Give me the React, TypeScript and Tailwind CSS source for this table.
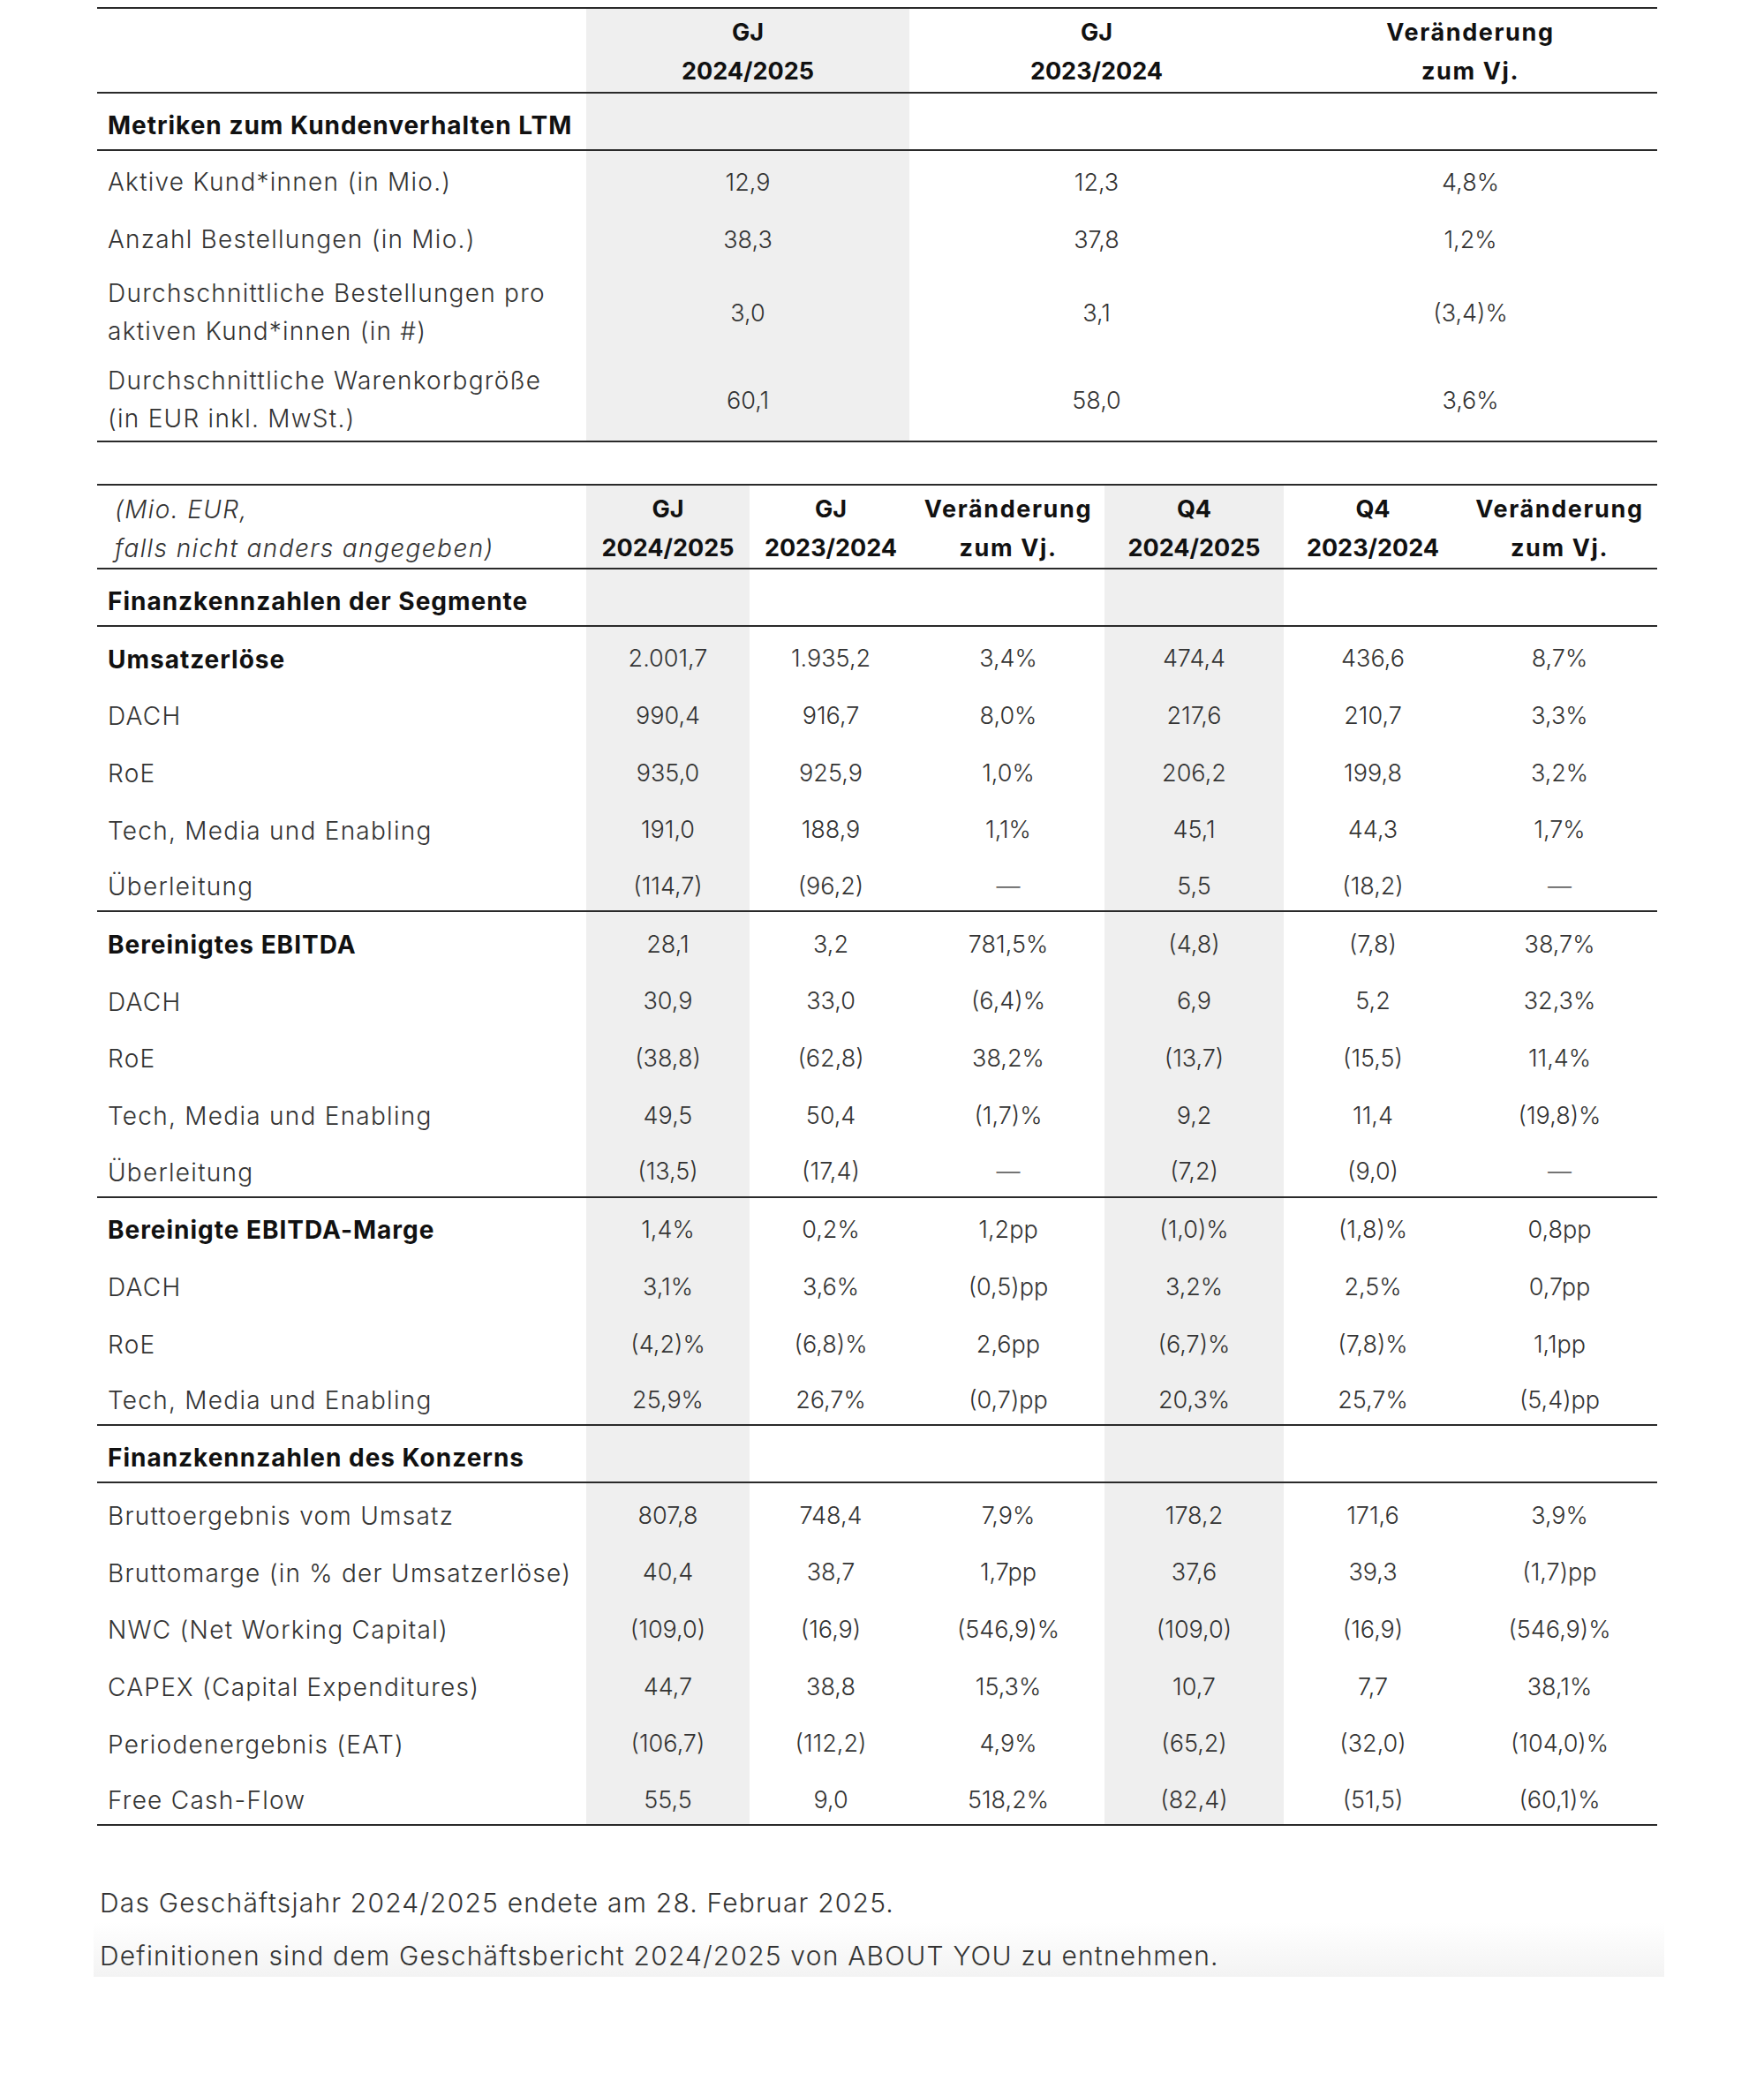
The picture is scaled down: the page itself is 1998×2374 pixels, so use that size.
import React from "react";

type Row = { label: string; values: string[]; bold?: boolean; line?: boolean };

const font = { fontFamily: "Inter, 'Noto Sans', sans-serif" };

const kundenRows: Row[] = [
  { label: "Aktive Kund*innen (in Mio.)", values: ["12,9", "12,3", "4,8%"] },
  { label: "Anzahl Bestellungen (in Mio.)", values: ["38,3", "37,8", "1,2%"] },
  {
    label: "Durchschnittliche Bestellungen pro\naktiven Kund*innen (in #)",
    values: ["3,0", "3,1", "(3,4)%"],
  },
  {
    label: "Durchschnittliche Warenkorbgröße\n(in EUR inkl. MwSt.)",
    values: ["60,1", "58,0", "3,6%"],
  },
];

const segmentRows: Row[] = [
  { label: "Umsatzerlöse", bold: true, values: ["2.001,7", "1.935,2", "3,4%", "474,4", "436,6", "8,7%"] },
  { label: "DACH", values: ["990,4", "916,7", "8,0%", "217,6", "210,7", "3,3%"] },
  { label: "RoE", values: ["935,0", "925,9", "1,0%", "206,2", "199,8", "3,2%"] },
  { label: "Tech, Media und Enabling", values: ["191,0", "188,9", "1,1%", "45,1", "44,3", "1,7%"] },
  { label: "Überleitung", line: true, values: ["(114,7)", "(96,2)", "—", "5,5", "(18,2)", "—"] },
  { label: "Bereinigtes EBITDA", bold: true, values: ["28,1", "3,2", "781,5%", "(4,8)", "(7,8)", "38,7%"] },
  { label: "DACH", values: ["30,9", "33,0", "(6,4)%", "6,9", "5,2", "32,3%"] },
  { label: "RoE", values: ["(38,8)", "(62,8)", "38,2%", "(13,7)", "(15,5)", "11,4%"] },
  { label: "Tech, Media und Enabling", values: ["49,5", "50,4", "(1,7)%", "9,2", "11,4", "(19,8)%"] },
  { label: "Überleitung", line: true, values: ["(13,5)", "(17,4)", "—", "(7,2)", "(9,0)", "—"] },
  { label: "Bereinigte EBITDA-Marge", bold: true, values: ["1,4%", "0,2%", "1,2pp", "(1,0)%", "(1,8)%", "0,8pp"] },
  { label: "DACH", values: ["3,1%", "3,6%", "(0,5)pp", "3,2%", "2,5%", "0,7pp"] },
  { label: "RoE", values: ["(4,2)%", "(6,8)%", "2,6pp", "(6,7)%", "(7,8)%", "1,1pp"] },
  { label: "Tech, Media und Enabling", line: true, values: ["25,9%", "26,7%", "(0,7)pp", "20,3%", "25,7%", "(5,4)pp"] },
];

const konzernRows: Row[] = [
  { label: "Bruttoergebnis vom Umsatz", values: ["807,8", "748,4", "7,9%", "178,2", "171,6", "3,9%"] },
  { label: "Bruttomarge (in % der Umsatzerlöse)", values: ["40,4", "38,7", "1,7pp", "37,6", "39,3", "(1,7)pp"] },
  { label: "NWC (Net Working Capital)", values: ["(109,0)", "(16,9)", "(546,9)%", "(109,0)", "(16,9)", "(546,9)%"] },
  { label: "CAPEX (Capital Expenditures)", values: ["44,7", "38,8", "15,3%", "10,7", "7,7", "38,1%"] },
  { label: "Periodenergebnis (EAT)", values: ["(106,7)", "(112,2)", "4,9%", "(65,2)", "(32,0)", "(104,0)%"] },
  { label: "Free Cash-Flow", line: true, values: ["55,5", "9,0", "518,2%", "(82,4)", "(51,5)", "(60,1)%"] },
];

const topCols = "grid grid-cols-[554px_366px_424px_423px]";
const mainCols = "grid grid-cols-[554px_185px_184px_218px_203px_202px_221px]";

// label styles — the original face is wider than Inter, so letters get some tracking
const lightLabel = "text-[28px] font-light tracking-[0.045em] text-[#333]";
const boldLabel = "text-[28px] font-bold tracking-[0.035em] text-[#111]";
const valueText = "text-[27px] font-light text-[#333]";

function Cell({ shaded, children, className = "" }: { shaded?: boolean; children?: React.ReactNode; className?: string }) {
  return (
    <div className={`flex items-center justify-center text-center ${shaded ? "bg-[#efefef]" : ""} ${className}`}>
      {children}
    </div>
  );
}

function HeadText({ a, b, wide }: { a: string; b: string; wide?: boolean }) {
  return (
    <div className="pt-[4px] text-[27px] font-bold leading-[44px] text-[#111]">
      <div className={wide ? "tracking-[0.06em]" : ""}>{a}</div>
      <div className={wide ? "tracking-[0.06em]" : ""}>{b}</div>
    </div>
  );
}

function KundenTable() {
  return (
    <div>
      <div className={`${topCols} h-[98px] border-y-2 border-[#2a2a2a]`}>
        <div />
        <Cell shaded><HeadText a="GJ" b="2024/2025" /></Cell>
        <Cell><HeadText a="GJ" b="2023/2024" /></Cell>
        <Cell><HeadText a="Veränderung" b="zum Vj." wide /></Cell>
      </div>
      <div className={`${topCols} h-[65px] border-b-2 border-[#2a2a2a]`}>
        <div className={`flex items-center pl-[12px] pt-[9px] ${boldLabel}`}>
          Metriken zum Kundenverhalten LTM
        </div>
        <Cell shaded />
        <div />
        <div />
      </div>
      {kundenRows.map((r, i) => {
        const two = r.label.includes("\n");
        const last = i === kundenRows.length - 1;
        return (
          <div
            key={r.label}
            className={`${topCols} ${two ? "h-[100px]" : "h-[65px]"} ${last ? "border-b-2 border-[#2a2a2a]" : ""}`}
          >
            <div className={`flex items-center whitespace-pre-line pl-[12px] pt-[6px] leading-[43px] ${lightLabel}`}>
              {r.label}
            </div>
            {r.values.map((v, j) => (
              <Cell key={j} shaded={j === 0} className={`pt-[8px] ${valueText}`}>
                {v}
              </Cell>
            ))}
          </div>
        );
      })}
    </div>
  );
}

function SectionHead({ title }: { title: string }) {
  return (
    <div className={`${mainCols} h-[64.7px] border-b-2 border-[#2a2a2a]`}>
      <div className={`flex items-center pl-[12px] pt-[9px] ${boldLabel}`}>{title}</div>
      <Cell shaded />
      <div />
      <div />
      <Cell shaded />
      <div />
      <div />
    </div>
  );
}

function DataRow({ r }: { r: Row }) {
  return (
    <div className={`${mainCols} h-[64.7px] ${r.line ? "border-b-2 border-[#2a2a2a]" : ""}`}>
      <div className={`flex items-center pl-[12px] pt-[9px] ${r.bold ? boldLabel : lightLabel}`}>
        {r.label}
      </div>
      {r.values.map((v, j) => (
        <Cell key={j} shaded={j === 0 || j === 3} className={`pt-[9px] ${valueText}`}>
          {v === "—" ? <span className="text-[#666]">—</span> : v}
        </Cell>
      ))}
    </div>
  );
}

function FinanzTable() {
  return (
    <div className="mt-[47px]">
      <div className={`${mainCols} h-[97px] border-y-2 border-[#2a2a2a]`}>
        <div className="flex flex-col justify-center pl-[20px] pt-[4px] text-[28px] font-light italic leading-[44px] tracking-[0.05em] text-[#333]">
          <div>(Mio. EUR,</div>
          <div>falls nicht anders angegeben)</div>
        </div>
        <Cell shaded><HeadText a="GJ" b="2024/2025" /></Cell>
        <Cell><HeadText a="GJ" b="2023/2024" /></Cell>
        <Cell><HeadText a="Veränderung" b="zum Vj." wide /></Cell>
        <Cell shaded><HeadText a="Q4" b="2024/2025" /></Cell>
        <Cell><HeadText a="Q4" b="2023/2024" /></Cell>
        <Cell><HeadText a="Veränderung" b="zum Vj." wide /></Cell>
      </div>
      <SectionHead title="Finanzkennzahlen der Segmente" />
      {segmentRows.map((r, i) => (
        <DataRow key={i} r={r} />
      ))}
      <SectionHead title="Finanzkennzahlen des Konzerns" />
      {konzernRows.map((r, i) => (
        <DataRow key={i} r={r} />
      ))}
    </div>
  );
}

export default function App() {
  return (
    <div className="min-h-screen w-[1998px] bg-white" style={font}>
      <div className="ml-[110px] w-[1767px] pt-[8px]">
        <KundenTable />
        <FinanzTable />
      </div>
      <div className="ml-[106px] mt-[65px] w-[1779px] text-[30px] font-light tracking-[0.04em] text-[#333]">
        <div className="h-[44px] pl-[7px] leading-[44px]">Das Geschäftsjahr 2024/2025 endete am 28. Februar 2025.</div>
        <div className="h-[62px] bg-gradient-to-b from-white to-[#f3f3f3] pl-[7px] pt-[16px] leading-[44px]">
          Definitionen sind dem Geschäftsbericht 2024/2025 von ABOUT YOU zu entnehmen.
        </div>
      </div>
    </div>
  );
}
